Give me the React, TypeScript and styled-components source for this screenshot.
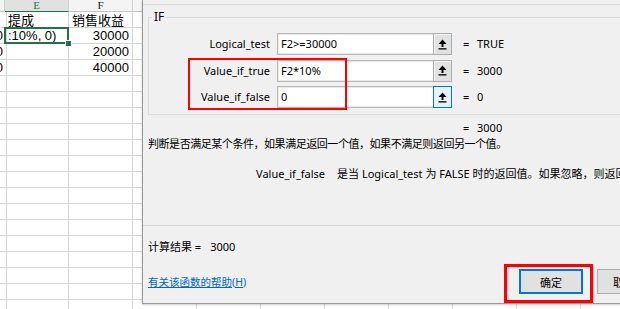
import React from 'react';
import styled, { createGlobalStyle } from 'styled-components';

const GlobalStyle = createGlobalStyle`
  html, body {
    margin: 0;
    padding: 0;
    background: #fff;
  }
  body {
    overflow: hidden;
  }
`;

const UI_FONT = `"Noto Sans", "Noto Sans CJK SC", sans-serif`;
const GRID = '#d6d6d6';

const Screen = styled.div`
  position: relative;
  width: 620px;
  height: 309px;
  overflow: hidden;
  background: #fff;
`;

/* ---------- spreadsheet behind the dialog ---------- */

const Sheet = styled.div`
  display: grid;
  grid-template-columns: 5px repeat(10, 64px);
  grid-template-rows: 12px;
  grid-auto-rows: 16px;
`;

const HeaderCell = styled.div<{ $active?: boolean }>`
  box-sizing: border-box;
  display: flex;
  align-items: center;
  justify-content: center;
  overflow: hidden;
  background: ${p => (p.$active ? '#e1e1e1' : '#f4f4f4')};
  color: ${p => (p.$active ? '#217346' : '#222')};
  border-right: 1px solid #cfcfcf;
  border-bottom: 1px solid ${p => (p.$active ? '#217346' : '#c4c4c4')};
  font-family: "Liberation Serif", serif;
  font-size: 11px;
  line-height: 11px;
`;

const Cell = styled.div<{ $align?: 'left' | 'right'; $selected?: boolean }>`
  position: relative;
  box-sizing: border-box;
  display: flex;
  align-items: center;
  justify-content: ${p => (p.$align === 'right' ? 'flex-end' : 'flex-start')};
  padding: 0 3px 0 3px;
  border-right: 1px solid ${GRID};
  border-bottom: 1px solid ${GRID};
  white-space: nowrap;
  overflow: ${p => (p.$selected ? 'visible' : 'hidden')};
  font-family: "Liberation Sans", "Noto Sans CJK SC", sans-serif;
  font-size: 13px;
  line-height: 15px;
  color: #000;
  ${p =>
    p.$selected &&
    `
    z-index: 1;
    &::after {
      content: '';
      position: absolute;
      left: -1px;
      top: -1px;
      right: -1px;
      bottom: -1px;
      border: 2px solid #217346;
    }
    &::before {
      content: '';
      position: absolute;
      right: -4px;
      bottom: -4px;
      width: 5px;
      height: 5px;
      background: #217346;
      border: 1px solid #fff;
      z-index: 2;
    }
  `}
`;

const CjkText = styled.span`
  font-family: "Noto Sans CJK SC", sans-serif;
  font-size: 13px;
  line-height: 15px;
`;

const COLS = ['D', 'E', 'F', 'G', 'H', 'I', 'J', 'K', 'L', 'M', 'N'];
const ROW_COUNT = 19;

type CellData = { text?: string; align?: 'left' | 'right'; cjk?: boolean; selected?: boolean };

const sheetData: Record<string, CellData> = {
  'E1': { text: '提成', cjk: true },
  'F1': { text: '销售收益', cjk: true },
  'D2': { text: '0', align: 'right' },
  'E2': { text: ':10%, 0)', selected: true },
  'F2': { text: '30000', align: 'right' },
  'D3': { text: '0', align: 'right' },
  'F3': { text: '20000', align: 'right' },
  'D4': { text: '0', align: 'right' },
  'F4': { text: '40000', align: 'right' },
};

const Spreadsheet = () => (
  <Sheet>
    {COLS.map(c => (
      <HeaderCell key={c} $active={c === 'E'}>
        {c === 'D' ? '' : c}
      </HeaderCell>
    ))}
    {Array.from({ length: ROW_COUNT }).map((_, r) =>
      COLS.map(c => {
        const d = sheetData[`${c}${r + 1}`];
        return (
          <Cell key={`${c}${r}`} $align={d?.align} $selected={d?.selected}>
            {d?.text && (d.cjk ? <CjkText>{d.text}</CjkText> : d.text)}
          </Cell>
        );
      })
    )}
  </Sheet>
);

/* ---------- function arguments dialog ---------- */

const Dialog = styled.div`
  position: absolute;
  left: 142px;
  top: 0;
  width: 560px;
  height: 304px;
  box-sizing: border-box;
  display: flex;
  flex-direction: column;
  padding-left: 5px;
  background: #f0f0f0;
  border-left: 1px solid #999;
  border-bottom: 1px solid #999;
  box-shadow: 0 1px 2px rgba(0, 0, 0, 0.2);
  font-family: ${UI_FONT};
  font-size: 11px;
  line-height: 16px;
  color: #000;
`;

const TopRule = styled.div`
  margin: 4px 0 0 -5px;
  border-top: 1px solid #dadada;
`;

const Group = styled.fieldset`
  margin: 4px 0 0 0;
  padding: 8px 0 6px 0;
  border: 1px solid #dcdcdc;
  min-width: 0;
`;

const Legend = styled.legend`
  margin-left: 3px;
  padding: 0 2px;
  line-height: 16px;
  font-size: 12px;
`;

const ArgRow = styled.div`
  display: flex;
  align-items: center;
  height: 22px;
  & + & {
    margin-top: 4.5px;
  }
`;

const ArgLabel = styled.div`
  width: 121px;
  text-align: right;
  white-space: nowrap;
`;

const FieldBox = styled.div`
  box-sizing: border-box;
  display: flex;
  margin-left: 7px;
  width: 175px;
  height: 22px;
  background: #fff;
  border: 1px solid #b9b9b9;
  box-shadow: inset 0 0 0 1px #e8e8e8;
`;

const FieldText = styled.div`
  flex: 1;
  display: flex;
  align-items: center;
  padding-left: 3px;
  white-space: nowrap;
`;

const RefButton = styled.div<{ $focused?: boolean }>`
  box-sizing: border-box;
  width: 19px;
  margin: -1px -1px -1px 0;
  display: flex;
  align-items: center;
  justify-content: center;
  background: ${p => (p.$focused ? '#e5f1fb' : '#e1e1e1')};
  border: 1px solid ${p => (p.$focused ? '#0078d7' : '#adadad')};
  box-shadow: ${p => (p.$focused ? 'none' : 'inset 1px 1px 0 #f4f4f4')};
`;

const Equals = styled.span`
  margin-left: 11px;
  width: 14px;
`;

const ResultRow = styled.div`
  display: flex;
  margin-top: 5px;
  padding-left: 304px;
  height: 16px;
`;

const Description = styled.div`
  height: 16px;
  white-space: nowrap;
  letter-spacing: -0.45px;
`;

const ArgHelp = styled.div`
  display: flex;
  margin-top: 14px;
  padding-left: 108px;
  height: 16px;
  white-space: nowrap;
`;

const ArgHelpText = styled.span`
  margin-left: 12px;
`;

const Divider = styled.div`
  margin: 43px 0 0 -5px;
  border-top: 1px solid #d7d7d7;
`;

const CalcResult = styled.div`
  display: flex;
  margin-top: 13px;
  height: 16px;
  white-space: nowrap;
`;

const CalcValue = styled.span`
  margin-left: 9px;
`;

const Footer = styled.div`
  display: flex;
  align-items: center;
  margin-top: 14px;
  height: 25px;
`;

const HelpLink = styled.a`
  flex: 0 0 371px;
  color: #0066cc;
  font-size: 10.5px;
  text-decoration: underline;
  white-space: nowrap;
  cursor: pointer;
`;

const DialogButton = styled.button<{ $primary?: boolean }>`
  box-sizing: border-box;
  flex: 0 0 auto;
  width: 64px;
  height: 25px;
  margin: 0;
  padding: 0 0 0 ${p => (p.$primary ? 0 : 15)}px;
  text-align: ${p => (p.$primary ? 'center' : 'left')};
  background: #e1e1e1;
  border: ${p => (p.$primary ? '2px solid #0078d7' : '1px solid #adadad')};
  font-family: ${UI_FONT};
  font-size: 11px;
  white-space: nowrap;
  color: #000;
  & + & {
    margin-left: 14px;
  }
`;

const Highlight = styled.div<{ $x: number; $y: number; $w: number; $h: number; $stroke: number }>`
  position: absolute;
  box-sizing: border-box;
  left: ${p => p.$x}px;
  top: ${p => p.$y}px;
  width: ${p => p.$w}px;
  height: ${p => p.$h}px;
  border: ${p => p.$stroke}px solid #ff0000;
  pointer-events: none;
  z-index: 5;
`;

const RefIcon = () => (
  <svg width="9" height="11" viewBox="0 0 9 11">
    <path d="M4.5 0.5 L8.5 5 L5.5 5 L5.5 8 L3.5 8 L3.5 5 L0.5 5 Z" fill="#000" />
    <rect x="0.5" y="9.2" width="8" height="1.3" fill="#000" />
  </svg>
);

const args = [
  { label: 'Logical_test', value: 'F2>=30000', result: 'TRUE' },
  { label: 'Value_if_true', value: 'F2*10%', result: '3000' },
  { label: 'Value_if_false', value: '0', result: '0', focused: true },
];

export default function App() {
  return (
    <Screen>
      <GlobalStyle />
      <Spreadsheet />
      <Dialog>
        <TopRule />
        <Group>
          <Legend>IF</Legend>
          {args.map(a => (
            <ArgRow key={a.label}>
              <ArgLabel>{a.label}</ArgLabel>
              <FieldBox>
                <FieldText>{a.value}</FieldText>
                <RefButton $focused={a.focused}>
                  <RefIcon />
                </RefButton>
              </FieldBox>
              <Equals>=</Equals>
              <span>{a.result}</span>
            </ArgRow>
          ))}
        </Group>
        <ResultRow>
          <Equals>=</Equals>
          <span>3000</span>
        </ResultRow>
        <Description>判断是否满足某个条件，如果满足返回一个值，如果不满足则返回另一个值。</Description>
        <ArgHelp>
          <span>Value_if_false</span>
          <ArgHelpText>是当 Logical_test 为 FALSE 时的返回值。如果忽略，则返回 FALSE</ArgHelpText>
        </ArgHelp>
        <Divider />
        <CalcResult>
          <span>计算结果 =</span>
          <CalcValue>3000</CalcValue>
        </CalcResult>
        <Footer>
          <HelpLink>有关该函数的帮助(H)</HelpLink>
          <DialogButton $primary>确定</DialogButton>
          <DialogButton>取消</DialogButton>
        </Footer>
      </Dialog>
      <Highlight $x={188} $y={58} $w={159} $h={52} $stroke={2} />
      <Highlight $x={504} $y={264} $w={89} $h={39} $stroke={3} />
    </Screen>
  );
}
